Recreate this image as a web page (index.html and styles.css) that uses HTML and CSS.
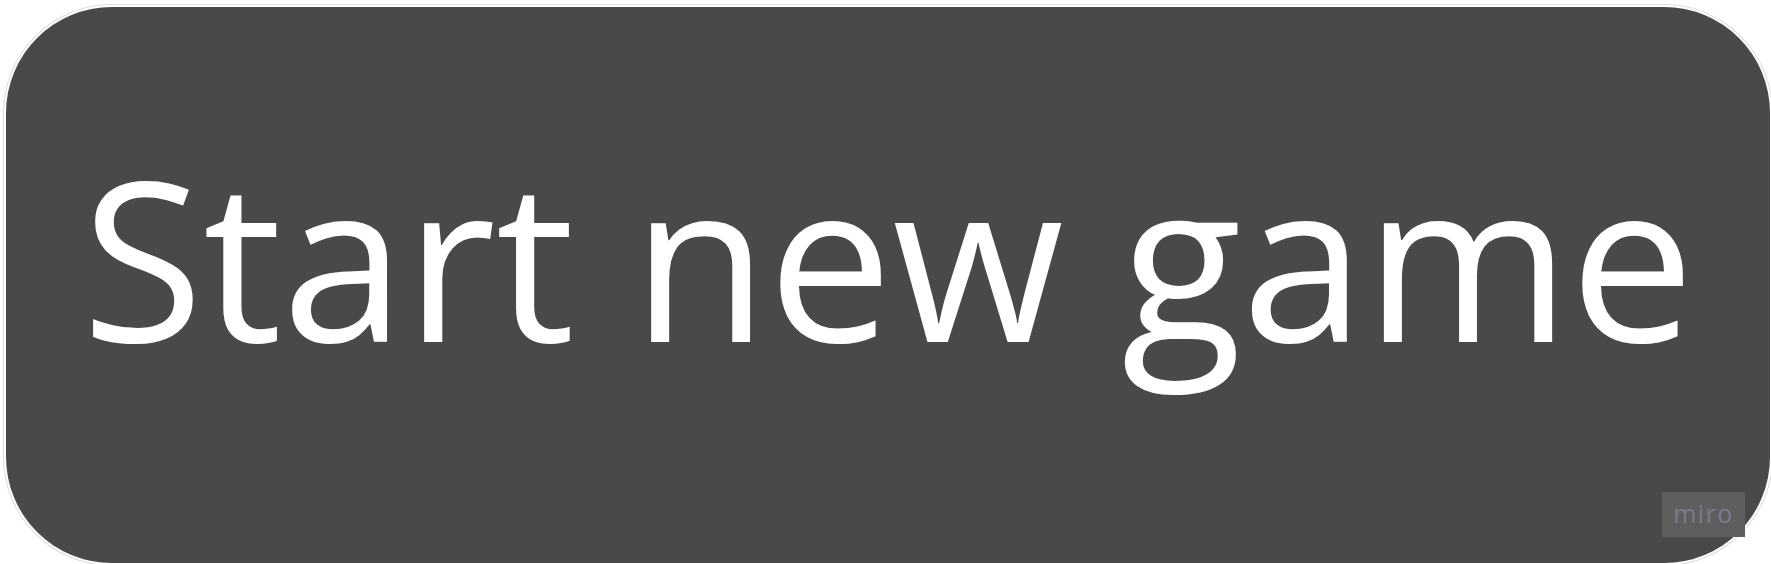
FILE: index.html
```html
<!DOCTYPE html>
<html lang="en">
<head>
<meta charset="utf-8">
<title>Start new game</title>
<link rel="stylesheet" href="styles.css">
</head>
<body>
<div class="page">
  <div class="button">
    <span class="label">Start new game</span>
    <div class="badge">miro</div>
  </div>
</div>
</body>
</html>
```
FILE: styles.css
```css
html, body {
  margin: 0;
  padding: 0;
  background: #ffffff;
  width: 1771px;
  height: 564px;
  overflow: hidden;
}
.page {
  padding: 7px 0 0 6px;
}
.button {
  position: relative;
  box-sizing: border-box;
  width: 1764px;
  height: 556px;
  background: #494949;
  border-radius: 106px;
  box-shadow: 0 0 0 2px #ffffff, 0 0 0 3px #dcdcdc;
  display: flex;
  align-items: center;
  justify-content: center;
  padding-bottom: 57px;
}
.label {
  font-family: "Open Sans", sans-serif;
  font-size: 221.5px;
  color: #ffffff;
  line-height: 1.362;
  white-space: nowrap;
}
.badge {
  position: absolute;
  left: 1656px;
  top: 485px;
  width: 83px;
  height: 45px;
  background: #5e5e5e;
  color: #7c7b90;
  font-family: "Open Sans", sans-serif;
  font-size: 25px;
  letter-spacing: 1.5px;
  display: flex;
  align-items: center;
  justify-content: center;
  padding-bottom: 3px;
  box-sizing: border-box;
}
```
